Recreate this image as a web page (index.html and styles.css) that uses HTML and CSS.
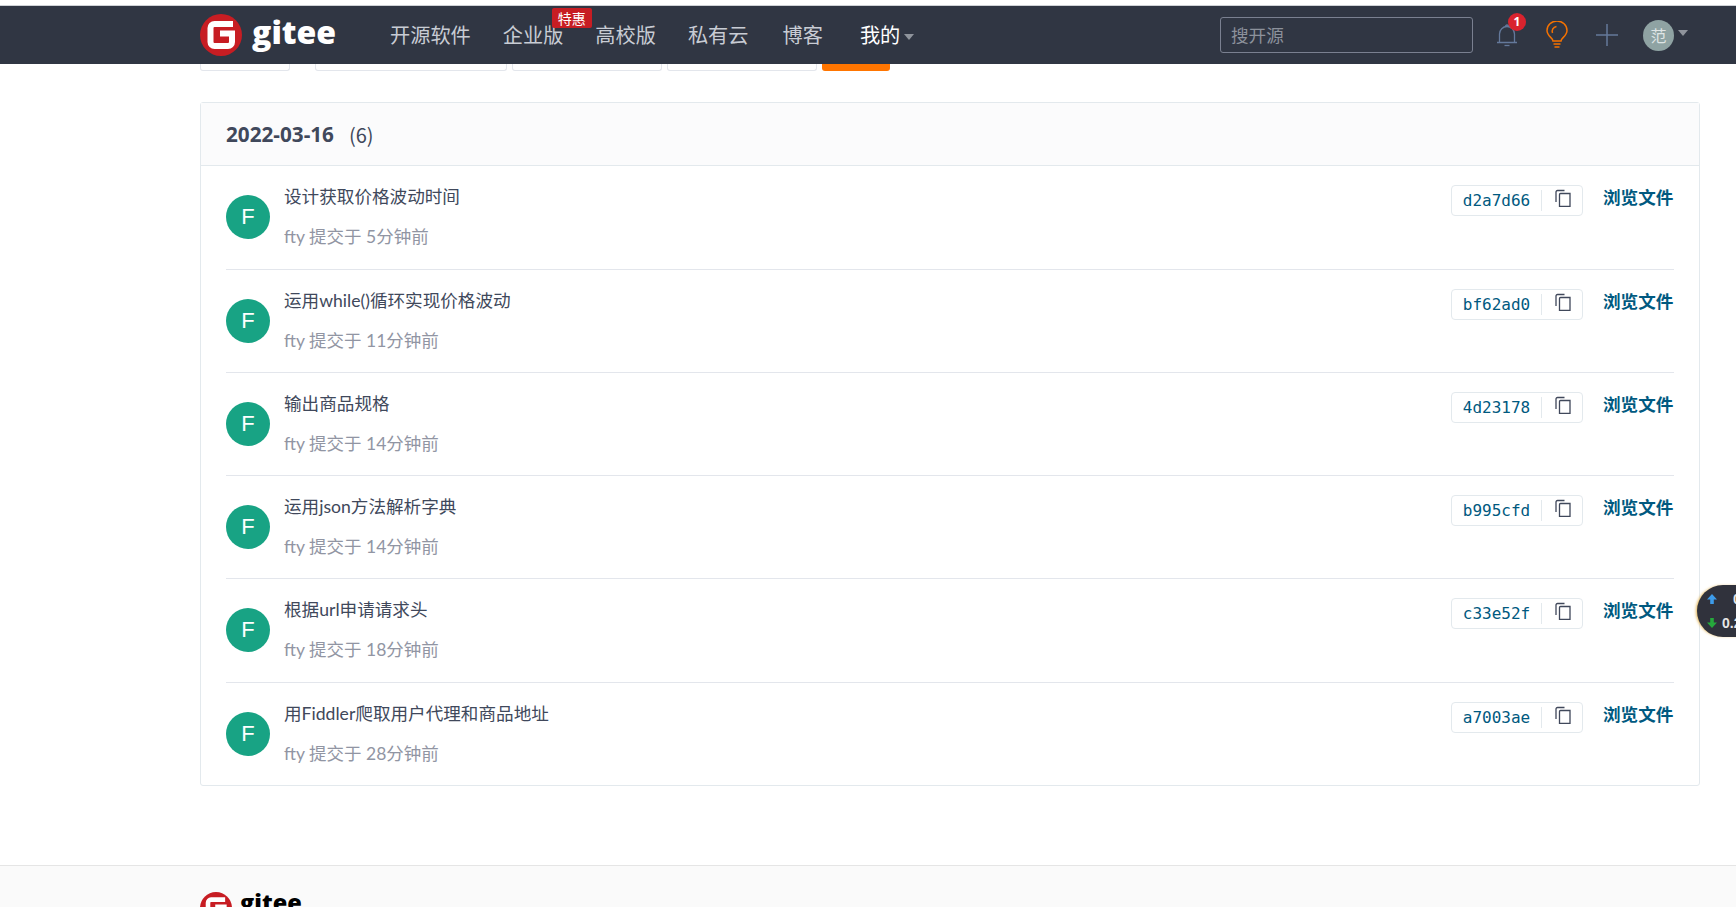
FILE: index.html
```html
<!DOCTYPE html>
<html lang="zh-CN">
<head>
    <meta charset="UTF-8">
    <meta name="viewport" content="width=device-width, initial-scale=1.0">
    <title>提交记录 - Gitee</title>
    <link rel="stylesheet" href="styles.css">
</head>
<body>
    <div class="top-strip"></div>

    <!-- Navbar -->
    <header class="navbar">
        <div class="nav-inner">
            <a class="logo">
                <svg class="logo-mark" viewBox="0 0 42 42">
                    <circle cx="21" cy="21" r="21" fill="#c71d23"/>
                    <path d="M33 10H14.500A4 4 0 0 0 10.500 14v14a4 4 0 0 0 4 4H28a4 4 0 0 0 4-4v-8.500H20" fill="none" stroke="#fff" stroke-width="6"/>
                </svg>
                <span class="logo-text">gitee</span>
            </a>
            <nav class="nav-links">
                <a class="nav-link link-open">开源软件</a>
                <a class="nav-link link-ent">企业版<span class="promo">特惠</span></a>
                <a class="nav-link link-edu">高校版</a>
                <a class="nav-link link-cloud">私有云</a>
                <a class="nav-link link-blog">博客</a>
                <a class="nav-link nav-mine">我的<i class="caret"></i></a>
            </nav>
            <div class="nav-search">搜开源</div>
            <div class="nav-icons">
                <span class="icon-slot bell">
                    <svg width="24" height="26" viewBox="0 0 24 26" fill="none" stroke="#64799b" stroke-width="1.300">
                        <path d="M2 20.500h20M4.500 20.500V12a7.500 7.500 0 0 1 15 0v8.500"/>
                        <path d="M10.500 4.500a1.500 1.500 0 0 1 3 0"/>
                        <path d="M9.500 23.500h5"/>
                    </svg>
                    <span class="badge">1</span>
                </span>
                <span class="icon-slot">
                    <svg width="24" height="28" viewBox="0 0 24 28" fill="none" stroke="#f57200" stroke-width="1.500">
                        <path d="M8 20c0-3-6-5-6-10.500a10 9.500 0 0 1 20 0C22 15 16 17 16 20z"/>
                        <path d="M7.500 12c-1-3 .5-6 4-6.500"/>
                        <path d="M8.500 23h7M9.500 26h5"/>
                    </svg>
                </span>
                <span class="icon-slot">
                    <svg width="22" height="22" viewBox="0 0 22 22" stroke="#64799b" stroke-width="1.500">
                        <path d="M0 11h22M11 0v22"/>
                    </svg>
                </span>
                <span class="user-menu">
                    <span class="user-avatar">范</span>
                    <i class="caret"></i>
                </span>
            </div>
        </div>
    </header>

    <!-- Filter row, mostly hidden under the navbar -->
    <div class="filters">
        <span class="filter f-branch"></span>
        <span class="filter f-search"></span>
        <span class="filter f-date"></span>
        <span class="filter f-date"></span>
        <span class="filter-btn"></span>
    </div>

    <main class="commits">
        <div class="commits-head"><b>2022-03-16</b><span class="commits-count">(6)</span></div>
        <div class="commit-list">
            <div class="commit">
                <span class="commit-avatar">F</span>
                <div class="commit-info">
                    <div class="commit-title">设计获取价格波动时间</div>
                    <div class="commit-meta">fty 提交于 5分钟前</div>
                </div>
                <div class="commit-sha"><span class="sha-text">d2a7d66</span><span class="sha-copy"><svg width="16" height="18" viewBox="0 0 16 18" fill="none" stroke="#40485b" stroke-width="1.300"><path d="M1 13V3a1.500 1.500 0 0 1 1.500-1.500h7"/><path d="M5.500 4.500H15v12.800H4.500V5.500a1 1 0 0 1 1-1z"/></svg></span></div>
                <a class="commit-browse">浏览文件</a>
            </div>
            <div class="commit">
                <span class="commit-avatar">F</span>
                <div class="commit-info">
                    <div class="commit-title">运用while()循环实现价格波动</div>
                    <div class="commit-meta">fty 提交于 11分钟前</div>
                </div>
                <div class="commit-sha"><span class="sha-text">bf62ad0</span><span class="sha-copy"><svg width="16" height="18" viewBox="0 0 16 18" fill="none" stroke="#40485b" stroke-width="1.300"><path d="M1 13V3a1.500 1.500 0 0 1 1.500-1.500h7"/><path d="M5.500 4.500H15v12.800H4.500V5.500a1 1 0 0 1 1-1z"/></svg></span></div>
                <a class="commit-browse">浏览文件</a>
            </div>
            <div class="commit">
                <span class="commit-avatar">F</span>
                <div class="commit-info">
                    <div class="commit-title">输出商品规格</div>
                    <div class="commit-meta">fty 提交于 14分钟前</div>
                </div>
                <div class="commit-sha"><span class="sha-text">4d23178</span><span class="sha-copy"><svg width="16" height="18" viewBox="0 0 16 18" fill="none" stroke="#40485b" stroke-width="1.300"><path d="M1 13V3a1.500 1.500 0 0 1 1.500-1.500h7"/><path d="M5.500 4.500H15v12.800H4.500V5.500a1 1 0 0 1 1-1z"/></svg></span></div>
                <a class="commit-browse">浏览文件</a>
            </div>
            <div class="commit">
                <span class="commit-avatar">F</span>
                <div class="commit-info">
                    <div class="commit-title">运用json方法解析字典</div>
                    <div class="commit-meta">fty 提交于 14分钟前</div>
                </div>
                <div class="commit-sha"><span class="sha-text">b995cfd</span><span class="sha-copy"><svg width="16" height="18" viewBox="0 0 16 18" fill="none" stroke="#40485b" stroke-width="1.300"><path d="M1 13V3a1.500 1.500 0 0 1 1.500-1.500h7"/><path d="M5.500 4.500H15v12.800H4.500V5.500a1 1 0 0 1 1-1z"/></svg></span></div>
                <a class="commit-browse">浏览文件</a>
            </div>
            <div class="commit">
                <span class="commit-avatar">F</span>
                <div class="commit-info">
                    <div class="commit-title">根据url申请请求头</div>
                    <div class="commit-meta">fty 提交于 18分钟前</div>
                </div>
                <div class="commit-sha"><span class="sha-text">c33e52f</span><span class="sha-copy"><svg width="16" height="18" viewBox="0 0 16 18" fill="none" stroke="#40485b" stroke-width="1.300"><path d="M1 13V3a1.500 1.500 0 0 1 1.500-1.500h7"/><path d="M5.500 4.500H15v12.800H4.500V5.500a1 1 0 0 1 1-1z"/></svg></span></div>
                <a class="commit-browse">浏览文件</a>
            </div>
            <div class="commit">
                <span class="commit-avatar">F</span>
                <div class="commit-info">
                    <div class="commit-title">用Fiddler爬取用户代理和商品地址</div>
                    <div class="commit-meta">fty 提交于 28分钟前</div>
                </div>
                <div class="commit-sha"><span class="sha-text">a7003ae</span><span class="sha-copy"><svg width="16" height="18" viewBox="0 0 16 18" fill="none" stroke="#40485b" stroke-width="1.300"><path d="M1 13V3a1.500 1.500 0 0 1 1.500-1.500h7"/><path d="M5.500 4.500H15v12.800H4.500V5.500a1 1 0 0 1 1-1z"/></svg></span></div>
                <a class="commit-browse">浏览文件</a>
            </div>
        </div>
    </main>

    <footer class="footer">
        <div class="footer-logo">
            <svg class="footer-mark" viewBox="0 0 42 42">
                <circle cx="21" cy="21" r="21" fill="#c71d23"/>
                <path d="M33 10H14.500A4 4 0 0 0 10.500 14v14a4 4 0 0 0 4 4H28a4 4 0 0 0 4-4v-8.500H20" fill="none" stroke="#fff" stroke-width="6"/>
            </svg>
            <span class="footer-text">gitee</span>
        </div>
    </footer>

    <!-- Floating speed widget from a browser extension -->
    <div class="speed-widget">
        <div class="speed-row">
            <svg class="speed-arrow" width="10" height="10" viewBox="0 0 10 10" fill="#3d9be9"><path d="M5 0l5 5.500H6.800V10H3.200V5.500H0z"/></svg>
            <span class="speed-num up-num">0</span>
        </div>
        <div class="speed-row">
            <svg class="speed-arrow" width="10" height="10" viewBox="0 0 10 10" fill="#26a83c"><path d="M5 10L0 4.500h3.200V0h3.600v4.500H10z"/></svg>
            <span class="speed-num">0.2</span>
        </div>
    </div>
</body>
</html>
```

FILE: styles.css
```css
/* Global Styles */
* {
    margin: 0;
    padding: 0;
    box-sizing: border-box;
}

html, body {
    height: 907px;
    overflow: hidden;
}

body {
    background-color: #fff;
    color: #40485b;
    font-family: "Open Sans", "Noto Sans CJK SC", sans-serif;
    position: relative;
}

.top-strip {
    height: 6px;
    border-bottom: 1px solid #cfd2d6;
}

/* Navbar */
.navbar {
    height: 58px;
    background-color: #303643;
}

.nav-inner {
    height: 100%;
    display: flex;
    align-items: center;
    padding-left: 200px;
}

.logo {
    display: flex;
    align-items: center;
    width: 190px;
    margin-top: -1px;
}

.logo-mark {
    width: 42px;
    height: 42px;
}

.logo-text {
    margin-left: 10px;
    margin-top: -6px;
    color: #fff;
    font-family: "Open Sans", sans-serif;
    font-size: 32px;
    font-weight: 800;
    line-height: 42px;
}

.nav-links {
    display: flex;
    align-items: center;
    width: 830px;
}

.nav-link {
    position: relative;
    color: #c8ccd4;
    font-family: "Noto Sans CJK SC", sans-serif;
    font-size: 20.200px;
    line-height: 30px;
    white-space: nowrap;
    margin-right: 32px;
}

.link-cloud {
    margin-right: 34px;
}

.link-blog {
    margin-right: 37px;
}

.nav-mine {
    color: #fff;
    display: flex;
    align-items: center;
    margin-right: 0;
}

.promo {
    position: absolute;
    top: -12px;
    left: 49px;
    width: 40px;
    height: 20px;
    background-color: #c71d23;
    border-radius: 2px;
    color: #fff;
    font-size: 14px;
    line-height: 20px;
    text-align: center;
}

.caret {
    display: inline-block;
    width: 0;
    height: 0;
    border-left: 5.500px solid transparent;
    border-right: 5.500px solid transparent;
    border-top: 6px solid #8f949c;
}

.nav-mine .caret {
    margin-left: 4px;
    margin-top: 3px;
}

.nav-search {
    width: 253px;
    height: 36px;
    padding-left: 10px;
    border: 1px solid #7a8090;
    border-radius: 3px;
    color: #8c919b;
    font-family: "Noto Sans CJK SC", sans-serif;
    font-size: 17.600px;
    line-height: 33px;
}

.nav-icons {
    display: flex;
    align-items: center;
    margin-left: 22px;
}

.icon-slot {
    position: relative;
    display: flex;
    justify-content: center;
    width: 50px;
}

.bell {
    width: 24px;
    margin-right: 13px;
}

.badge {
    position: absolute;
    top: -9px;
    right: -7px;
    width: 18px;
    height: 18px;
    border-radius: 50%;
    background-color: #d9232e;
    color: #fff;
    font-size: 12px;
    font-weight: 700;
    line-height: 18px;
    text-align: center;
}

.user-menu {
    display: flex;
    align-items: center;
    margin-left: 11px;
}

.user-avatar {
    width: 31px;
    height: 31px;
    border-radius: 50%;
    background-color: #8fa3a3;
    color: #dfe5e5;
    font-family: "Noto Sans CJK SC", sans-serif;
    font-size: 16px;
    line-height: 31px;
    text-align: center;
}

.user-menu .caret {
    margin-left: 4px;
    margin-top: -4px;
}

/* Filters */
.filters {
    display: flex;
    height: 7px;
    margin: 0 36px 0 200px;
    align-items: stretch;
}

.filter {
    border: 1px solid #e3e6ec;
    border-top: none;
    border-radius: 0 0 3px 3px;
    margin-right: 5px;
}

.f-branch {
    width: 90px;
    margin-right: 25px;
}

.f-search {
    width: 192px;
}

.f-date {
    width: 150px;
}

.filter-btn {
    width: 68px;
    background-color: #ff7500;
    border-radius: 0 0 3px 3px;
}

/* Commit list */
.commits {
    width: 1500px;
    height: 684px;
    margin: 31px 0 0 200px;
    border: 1px solid #e3e9ed;
    border-radius: 3px;
}

.commits-head {
    display: flex;
    align-items: center;
    height: 63px;
    padding-left: 25px;
    background-color: #fbfbfc;
    border-bottom: 1px solid #e3e9ed;
    font-size: 20.700px;
}

.commits-head b {
    color: #40485b;
}

.commits-count {
    margin-left: 15px;
    font-family: "Noto Sans CJK SC", sans-serif;
    font-size: 20px;
    font-weight: 400;
}

.commit-list {
    margin-top: 0.400px;
    padding: 0 25px;
}

.commit {
    display: flex;
    height: 103.250px;
    border-bottom: 1px solid #e3e6ec;
}

.commit:last-child {
    border-bottom: none;
}

.commit-avatar {
    flex: none;
    width: 44px;
    height: 44px;
    margin-top: 29px;
    border-radius: 50%;
    background-color: #18a384;
    color: #fff;
    font-family: "Liberation Sans", sans-serif;
    font-size: 22px;
    line-height: 44px;
    text-align: center;
}

.commit-info {
    flex: 1;
    margin-left: 14px;
    padding-top: 18px;
    font-family: "Lato", "Noto Sans CJK SC", sans-serif;
}

.commit-title {
    font-size: 17.600px;
    line-height: 26px;
    color: #40485b;
}

.commit-meta {
    margin-top: 14px;
    font-size: 17.500px;
    line-height: 26px;
    color: #9195a3;
}

.commit-sha {
    display: flex;
    align-items: center;
    width: 132px;
    height: 31px;
    margin-top: 19px;
    border: 1px solid #e3e9ed;
    border-radius: 4px;
}

.sha-text {
    width: 90px;
    margin-right: 2px;
    padding-top: 1px;
    border-right: 1px solid #e3e9ed;
    color: #005980;
    font-family: "DejaVu Sans Mono", monospace;
    font-size: 16px;
    line-height: 20px;
    text-align: center;
}

.sha-copy {
    flex: 1;
    display: flex;
    justify-content: center;
    margin-top: -5px;
}

.commit-browse {
    width: 71px;
    margin-left: 20px;
    padding-top: 18px;
    color: #005980;
    font-family: "Noto Sans CJK SC", sans-serif;
    font-size: 17.600px;
    font-weight: 700;
    line-height: 26px;
    white-space: nowrap;
}

/* Footer */
.footer {
    height: 42px;
    margin-top: 79px;
    padding: 26px 0 0 200px;
    background-color: #fafafa;
    border-top: 1px solid #e5e5e5;
    overflow: hidden;
}

.footer-logo {
    display: flex;
    align-items: flex-start;
}

.footer-mark {
    width: 32px;
    height: 32px;
}

.footer-text {
    margin-left: 8px;
    margin-top: -6px;
    color: #000;
    font-size: 23.500px;
    font-weight: 800;
    line-height: 32px;
}

/* Floating speed widget */
.speed-widget {
    position: absolute;
    top: 585px;
    left: 1697px;
    width: 70px;
    height: 52px;
    padding-top: 2px;
    background-color: #30323c;
    border-radius: 26px;
    box-shadow: -2px 0 3px -1px #e2b04a;
    color: #e6e6e6;
    font-family: "Liberation Sans", sans-serif;
    font-size: 14px;
    font-weight: 700;
}

.speed-row {
    display: flex;
    align-items: center;
    height: 24px;
    padding-left: 10px;
}

.speed-num {
    margin-left: 5px;
}

.up-num {
    margin-left: 16px;
}
```
